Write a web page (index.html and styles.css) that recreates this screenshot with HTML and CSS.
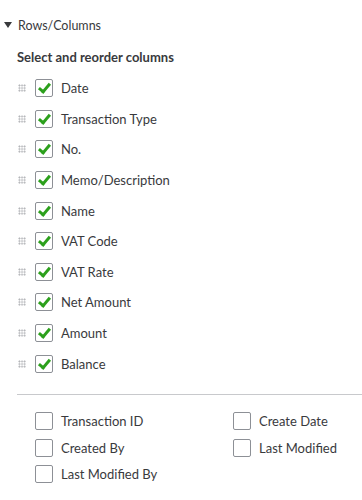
FILE: index.html
```html
<!DOCTYPE html>
<html lang="en">
<head>
  <meta charset="UTF-8" />
  <meta name="viewport" content="width=device-width, initial-scale=1.0"/>
  <title>Rows/Columns</title>
  <link rel="stylesheet" href="styles.css">
</head>
<body>

<section class="panel">
  <div class="toggle"><span class="caret"></span>Rows/Columns</div>
  <h3>Select and reorder columns</h3>

  <ul class="columns">
    <li><span class="grip"></span><span class="box checked"></span>Date</li>
    <li><span class="grip"></span><span class="box checked"></span>Transaction Type</li>
    <li><span class="grip"></span><span class="box checked"></span>No.</li>
    <li><span class="grip"></span><span class="box checked"></span>Memo/Description</li>
    <li><span class="grip"></span><span class="box checked"></span>Name</li>
    <li><span class="grip"></span><span class="box checked"></span>VAT Code</li>
    <li><span class="grip"></span><span class="box checked"></span>VAT Rate</li>
    <li><span class="grip"></span><span class="box checked"></span>Net Amount</li>
    <li><span class="grip"></span><span class="box checked"></span>Amount</li>
    <li><span class="grip"></span><span class="box checked"></span>Balance</li>
  </ul>

  <hr>

  <ul class="extra">
    <li><span class="box"></span>Transaction ID</li>
    <li><span class="box"></span>Create Date</li>
    <li><span class="box"></span>Created By</li>
    <li><span class="box"></span>Last Modified</li>
    <li><span class="box"></span>Last Modified By</li>
  </ul>
</section>

</body>
</html>
```

FILE: styles.css
```css
body {
  margin: 0;
  background: #fff;
  color: #393a3d;
  font-family: Lato, "Open Sans", sans-serif;
  font-size: 13px;
}
.panel {
  padding: 16px 0 0 4px;
}
.toggle {
  display: flex;
  align-items: center;
  gap: 6px;
  height: 18px;
  font-size: 12.5px;
}
.caret {
  width: 0;
  height: 0;
  border-left: 4px solid transparent;
  border-right: 4px solid transparent;
  border-top: 6px solid #393a3d;
}
h3 {
  margin: 14px 0 0 13px;
  font-size: 13px;
  font-weight: bold;
  height: 18px;
  line-height: 18px;
}
ul {
  list-style: none;
  margin: 0;
  padding: 0;
}
.columns {
  margin-top: 7px;
  padding-left: 14px;
}
.columns li {
  display: flex;
  align-items: center;
  height: 30.6px;
}
.grip {
  width: 8px;
  height: 8px;
  margin-right: 9px;
  background-image: radial-gradient(circle, #a4a6aa 0.8px, transparent 1px);
  background-size: 2.7px 2.7px;
}
.box {
  box-sizing: border-box;
  width: 18px;
  height: 18px;
  border: 1px solid #8d9096;
  border-radius: 2px;
  margin-right: 8px;
  position: relative;
  flex: none;
}
.box.checked::after {
  content: "";
  position: absolute;
  left: 5px;
  top: 1px;
  width: 4px;
  height: 9px;
  border: solid #2ca01c;
  border-width: 0 3px 3px 0;
  transform: rotate(40deg);
}
hr {
  border: none;
  border-top: 1px solid #c8c9cc;
  margin: 15px 0 0 13px;
}
.extra {
  display: grid;
  grid-template-columns: 198px 1fr;
  padding: 13px 0 0 31px;
}
.extra li {
  display: flex;
  align-items: center;
  height: 26.5px;
}
.extra .box {
  margin-right: 8px;
}
```
